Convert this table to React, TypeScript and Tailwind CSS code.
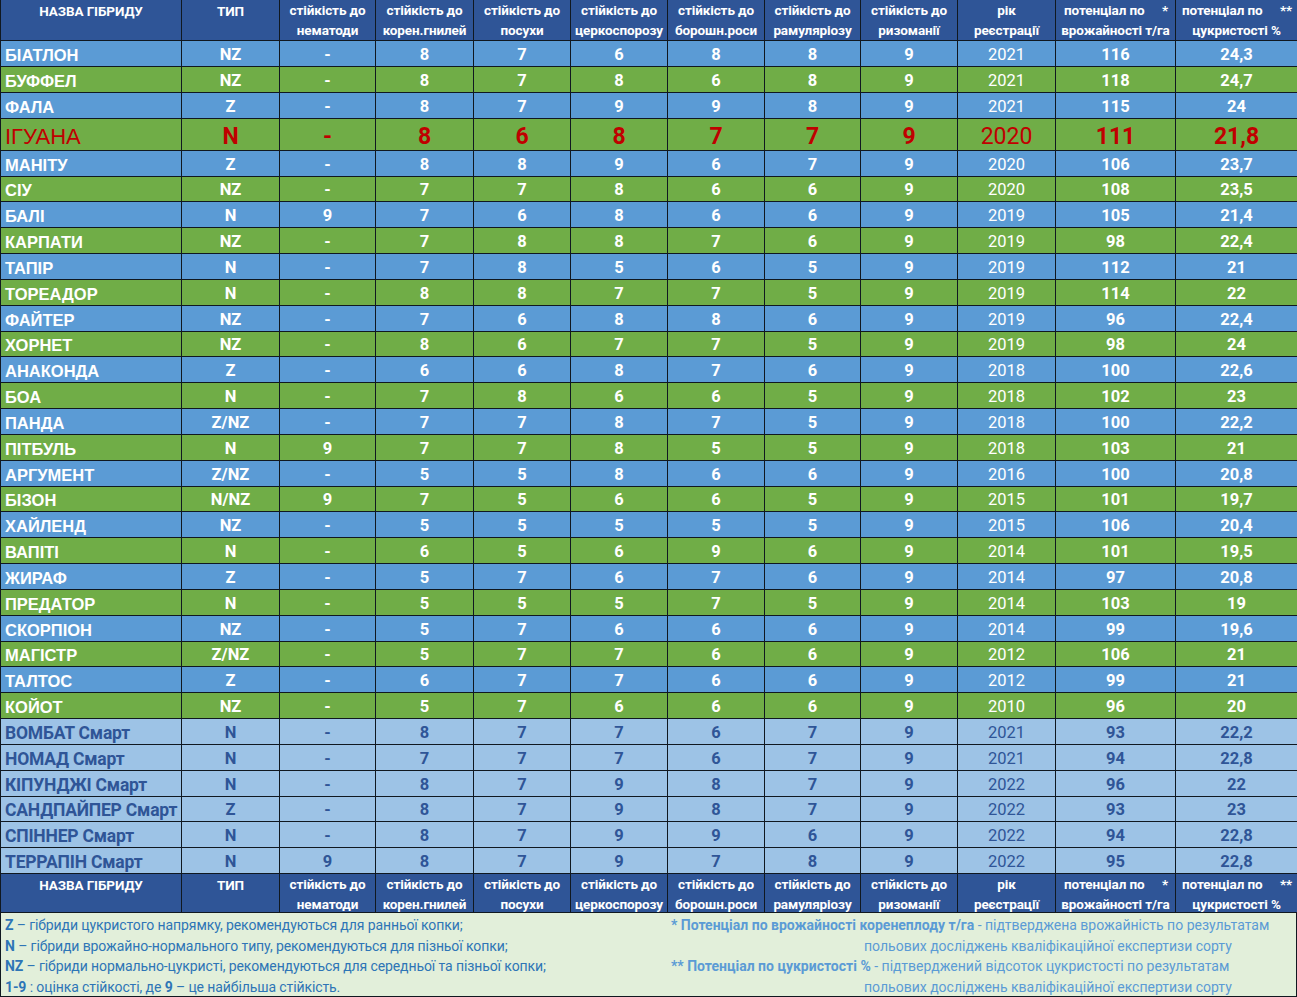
import React from "react";

type Kind = "blue" | "green" | "light";
type Row = {
  n: string;
  t: string;
  v: string[];
  y: string;
  p: string;
  s: string;
  k: Kind;
  hl?: boolean;
  short?: boolean;
};

const raw: [string, string, string, string, string, string, string, string, string, string, string, string][] = [
  ["БІАТЛОН", "NZ", "-", "8", "7", "6", "8", "8", "9", "2021", "116", "24,3"],
  ["БУФФЕЛ", "NZ", "-", "8", "7", "8", "6", "8", "9", "2021", "118", "24,7"],
  ["ФАЛА", "Z", "-", "8", "7", "9", "9", "8", "9", "2021", "115", "24"],
  ["ІГУАНА", "N", "-", "8", "6", "8", "7", "7", "9", "2020", "111", "21,8"],
  ["МАНІТУ", "Z", "-", "8", "8", "9", "6", "7", "9", "2020", "106", "23,7"],
  ["СІУ", "NZ", "-", "7", "7", "8", "6", "6", "9", "2020", "108", "23,5"],
  ["БАЛІ", "N", "9", "7", "6", "8", "6", "6", "9", "2019", "105", "21,4"],
  ["КАРПАТИ", "NZ", "-", "7", "8", "8", "7", "6", "9", "2019", "98", "22,4"],
  ["ТАПІР", "N", "-", "7", "8", "5", "6", "5", "9", "2019", "112", "21"],
  ["ТОРЕАДОР", "N", "-", "8", "8", "7", "7", "5", "9", "2019", "114", "22"],
  ["ФАЙТЕР", "NZ", "-", "7", "6", "8", "8", "6", "9", "2019", "96", "22,4"],
  ["ХОРНЕТ", "NZ", "-", "8", "6", "7", "7", "5", "9", "2019", "98", "24"],
  ["АНАКОНДА", "Z", "-", "6", "6", "8", "7", "6", "9", "2018", "100", "22,6"],
  ["БОА", "N", "-", "7", "8", "6", "6", "5", "9", "2018", "102", "23"],
  ["ПАНДА", "Z/NZ", "-", "7", "7", "8", "7", "5", "9", "2018", "100", "22,2"],
  ["ПІТБУЛЬ", "N", "9", "7", "7", "8", "5", "5", "9", "2018", "103", "21"],
  ["АРГУМЕНТ", "Z/NZ", "-", "5", "5", "8", "6", "6", "9", "2016", "100", "20,8"],
  ["БІЗОН", "N/NZ", "9", "7", "5", "6", "6", "5", "9", "2015", "101", "19,7"],
  ["ХАЙЛЕНД", "NZ", "-", "5", "5", "5", "5", "5", "9", "2015", "106", "20,4"],
  ["ВАПІТІ", "N", "-", "6", "5", "6", "9", "6", "9", "2014", "101", "19,5"],
  ["ЖИРАФ", "Z", "-", "5", "7", "6", "7", "6", "9", "2014", "97", "20,8"],
  ["ПРЕДАТОР", "N", "-", "5", "5", "5", "7", "5", "9", "2014", "103", "19"],
  ["СКОРПІОН", "NZ", "-", "5", "7", "6", "6", "6", "9", "2014", "99", "19,6"],
  ["МАГІСТР", "Z/NZ", "-", "5", "7", "7", "6", "6", "9", "2012", "106", "21"],
  ["ТАЛТОС", "Z", "-", "6", "7", "7", "6", "6", "9", "2012", "99", "21"],
  ["КОЙОТ", "NZ", "-", "5", "7", "6", "6", "6", "9", "2010", "96", "20"],
  ["ВОМБАТ Смарт", "N", "-", "8", "7", "7", "6", "7", "9", "2021", "93", "22,2"],
  ["НОМАД Смарт", "N", "-", "7", "7", "7", "6", "7", "9", "2021", "94", "22,8"],
  ["КІПУНДЖІ Смарт", "N", "-", "8", "7", "9", "8", "7", "9", "2022", "96", "22"],
  ["САНДПАЙПЕР Смарт", "Z", "-", "8", "7", "9", "8", "7", "9", "2022", "93", "23"],
  ["СПІННЕР Смарт", "N", "-", "8", "7", "9", "9", "6", "9", "2022", "94", "22,8"],
  ["ТЕРРАПІН Смарт", "N", "9", "8", "7", "9", "7", "8", "9", "2022", "95", "22,8"],
];

const rows: Row[] = raw.map((r, i) => ({
  n: r[0],
  t: r[1],
  v: [r[2], r[3], r[4], r[5], r[6], r[7], r[8]],
  y: r[9],
  p: r[10],
  s: r[11],
  k: i >= 26 ? "light" : i % 2 === 0 ? "blue" : "green",
  hl: r[0] === "ІГУАНА",
  short: i % 6 === 5,
}));

const GRID =
  "grid grid-cols-[181px_98px_96px_98px_97px_97px_97px_96px_97px_98px_120px_122px] grid-rows-[100%]";

const bgOf: Record<Kind, string> = {
  blue: "bg-[#5b9bd5]",
  green: "bg-[#70ad47]",
  light: "bg-[#9dc3e6]",
};

const cell = "border-r border-b border-[#101820] flex items-center justify-center min-h-0";

function HeaderRow({ h }: { h: string }) {
  const two = (a: string, b: string) => (
    <div className={`${cell} flex-col !justify-start leading-[20px] whitespace-nowrap`}>
      <span>{a}</span>
      <span>{b}</span>
    </div>
  );
  return (
    <div
      className={`${GRID} ${h} bg-[#2f5597] text-white font-bold text-[13.5px] tracking-[-0.1px] overflow-hidden`}
      style={{ fontFamily: "Roboto, 'Noto Sans', sans-serif" }}
    >
      <div className={`${cell} !items-start leading-[22px]`}>НАЗВА ГІБРИДУ</div>
      <div className={`${cell} !items-start leading-[22px]`}>ТИП</div>
      {two("стійкість до", "нематоди")}
      {two("стійкість до", "корен.гнилей")}
      {two("стійкість до", "посухи")}
      {two("стійкість до", "церкоспорозу")}
      {two("стійкість до", "борошн.роси")}
      {two("стійкість до", "рамуляріозу")}
      {two("стійкість до", "ризоманії")}
      {two("рік", "реєстрації")}
      <div className={`${cell} flex-col !justify-start leading-[20px] whitespace-nowrap`}>
        <div className="flex w-full justify-between pl-[8px] pr-[7px]">
          <span>потенціал по</span>
          <span>*</span>
        </div>
        <span>врожайності т/га</span>
      </div>
      <div className={`${cell} flex-col !justify-start leading-[20px] whitespace-nowrap`}>
        <div className="flex w-full justify-between pl-[6px] pr-[5px]">
          <span>потенціал по</span>
          <span>**</span>
        </div>
        <span>цукристості %</span>
      </div>
    </div>
  );
}

function DataRow({ r }: { r: Row }) {
  const txt = r.hl ? "text-[#c00000]" : r.k === "light" ? "text-[#2f5597]" : "text-white";
  const h = r.hl ? "h-[32px] leading-[24px]" : r.short ? "h-[25px] leading-[20px]" : "h-[26px] leading-[20px]";
  const num = r.hl ? "text-[23px]" : "text-[16.5px]";
  const pt = r.hl ? "pt-[4px]" : "pt-[2px]";
  return (
    <div
      className={`${GRID} ${h} ${bgOf[r.k]} ${txt} overflow-hidden`}
      style={{ fontFamily: "Roboto, 'Noto Sans', sans-serif" }}
    >
      {r.k === "light" ? (
        <div className={`${cell} !justify-start pl-[4px] ${pt} font-bold text-[17.5px] tracking-[-0.2px] whitespace-nowrap`}>
          {r.n}
        </div>
      ) : r.hl ? (
        <div
          className={`${cell} !justify-start pl-[4px] ${pt} text-[22px]`}
          style={{ fontFamily: "'Liberation Sans', Arial, sans-serif" }}
        >
          {r.n}
        </div>
      ) : (
        <div
          className={`${cell} !justify-start pl-[4px] ${pt} font-bold text-[16.5px]`}
          style={{ fontFamily: "'Liberation Sans', Arial, sans-serif" }}
        >
          {r.n}
        </div>
      )}
      <div className={`${cell} ${pt} font-bold ${r.hl ? "text-[23px]" : "text-[16.5px]"}`}>{r.t}</div>
      {r.v.map((x, i) => (
        <div key={i} className={`${cell} ${pt} font-bold ${num}`}>
          {x}
        </div>
      ))}
      <div className={`${cell} ${pt} ${num}`}>{r.y}</div>
      <div className={`${cell} ${pt} font-bold ${num}`}>{r.p}</div>
      <div className={`${cell} ${pt} font-bold ${num}`}>{r.s}</div>
    </div>
  );
}

export default function App() {
  return (
    <div className="w-[1297px] h-[997px] bg-white overflow-hidden">
      <div className="border-l border-[#101820]">
        <HeaderRow h="h-[41px]" />
        {rows.map((r) => (
          <DataRow key={r.n} r={r} />
        ))}
        <HeaderRow h="h-[39px]" />
        <div
          className="grid grid-cols-[664px_1fr] h-[84px] bg-[#e2efda] border-r border-b border-[#101820] text-[14px] leading-[20.5px]"
          style={{ fontFamily: "Roboto, 'Noto Sans', sans-serif" }}
        >
          <div className="flex flex-col pl-[4px] pt-[2px] text-[#2e75b6] whitespace-nowrap tracking-[-0.1px]">
            <div>
              <b>Z</b> – гібриди цукристого напрямку, рекомендуються для ранньої копки;
            </div>
            <div>
              <b>N</b> – гібриди врожайно-нормального типу, рекомендуються для пізньої копки;
            </div>
            <div>
              <b>NZ</b> – гібриди нормально-цукристі, рекомендуються для середньої та пізньої копки;
            </div>
            <div>
              <b>1-9</b> : оцінка стійкості, де <b>9</b> – це найбільша стійкість.
            </div>
          </div>
          <div className="flex flex-col pl-[6px] pt-[2px] text-[#5b9bd5] whitespace-nowrap">
            <div>
              <b>* Потенціал по врожайності коренеплоду т/га</b> - підтверджена врожайність по результатам
            </div>
            <div className="pl-[193px]">польових досліджень кваліфікаційної експертизи сорту</div>
            <div>
              <b>** Потенціал по цукристості %</b> - підтверджений відсоток цукристості по результатам
            </div>
            <div className="pl-[193px]">польових досліджень кваліфікаційної експертизи сорту</div>
          </div>
        </div>
      </div>
    </div>
  );
}
